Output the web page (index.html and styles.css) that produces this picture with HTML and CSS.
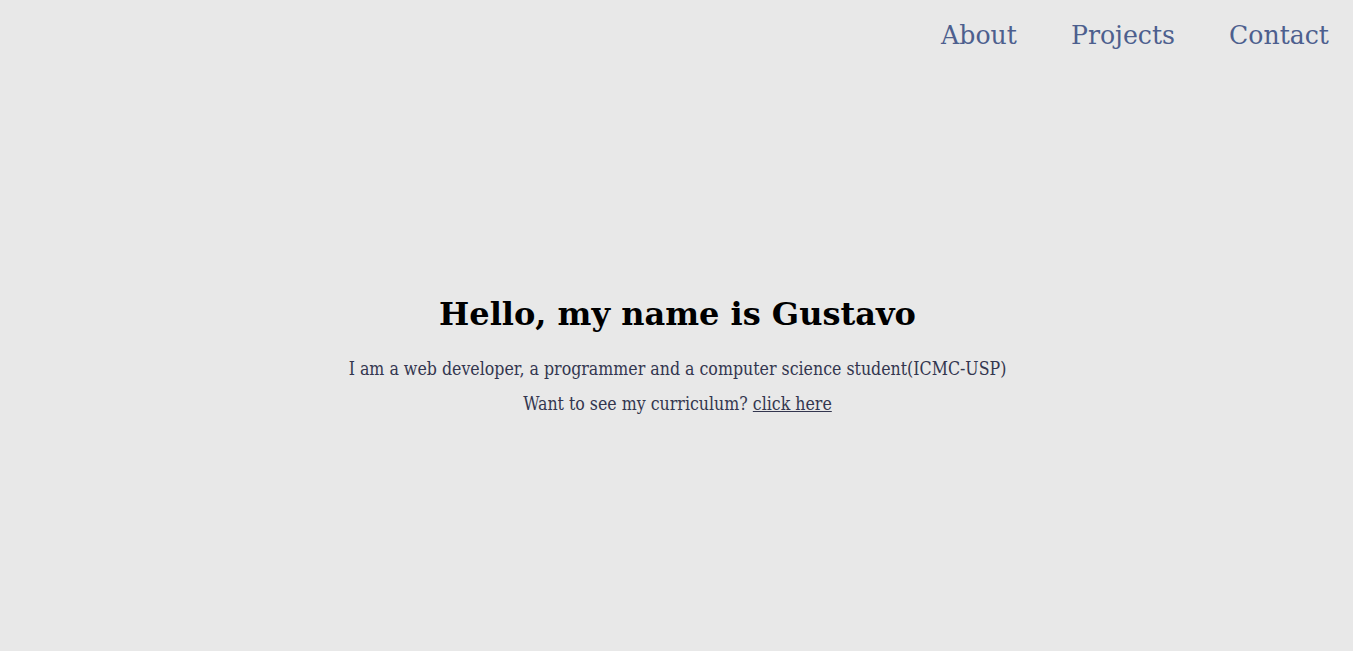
FILE: index.html
```html
<!DOCTYPE html>
<html>
<head>
<meta charset="utf-8">
<link rel="stylesheet" href="styles.css">
</head>
<body>
<header class="nav">
  <a class="nav-link" href="#">About</a>
  <a class="nav-link" href="#">Projects</a>
  <a class="nav-link" href="#">Contact</a>
</header>
<main class="hero">
  <h1 class="title">Hello, my name is Gustavo</h1>
  <p class="text">I am a web developer, a programmer and a computer science student(ICMC-USP)</p>
  <p class="text">Want to see my curriculum? <a class="link" href="#">click here</a></p>
</main>
</body>
</html>
```
FILE: styles.css
```css
html, body {
  margin: 0;
  padding: 0;
  background: #e8e8e8;
  height: 100%;
}
body {
  font-family: "DejaVu Serif", serif;
  display: flex;
  flex-direction: column;
}
.nav {
  display: flex;
  justify-content: flex-end;
  gap: 54px;
  padding: 21px 24px 0 0;
}
.nav-link {
  font-size: 25.2px;
  color: #4d5f8e;
  text-decoration: none;
  line-height: 30px;
}
.hero {
  flex: 1;
  display: flex;
  flex-direction: column;
  align-items: center;
  justify-content: center;
  padding-top: 8px;
  padding-left: 2px;
}
.title {
  font-size: 32px;
  font-weight: bold;
  color: #000;
  margin: 0 0 26px;
  line-height: 37px;
}
.text {
  font-family: "DejaVu Serif Condensed", "DejaVu Serif", serif;
  font-stretch: condensed;
  font-size: 17.6px;
  line-height: 21px;
  color: #33364f;
  margin: 0 0 14px;
}
.text:last-child {
  margin-bottom: 0;
}
.link {
  color: #33364f;
}
```
